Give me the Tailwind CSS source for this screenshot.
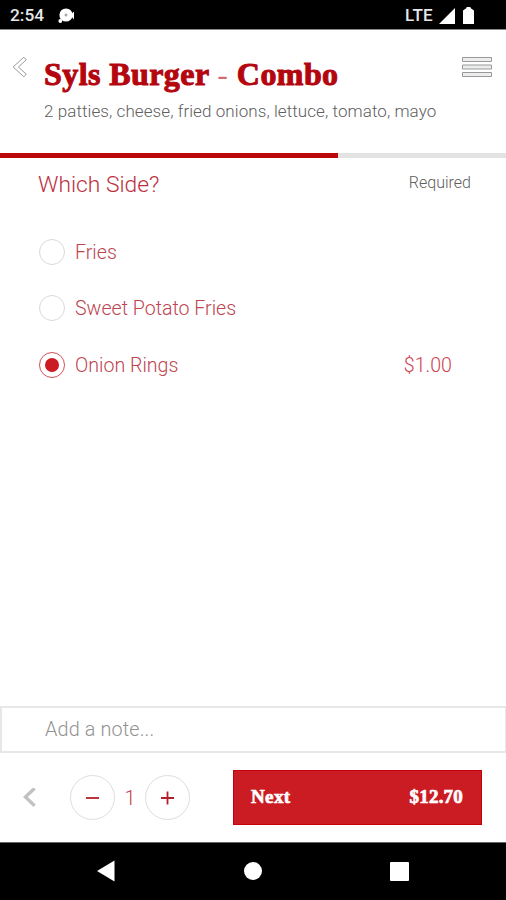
<!DOCTYPE html>
<html lang="en">

<head>
    <meta charset="UTF-8">
    <meta name="viewport" content="width=device-width, initial-scale=1.0">
    <title>Syls Burger - Combo</title>
    <script src="https://cdn.jsdelivr.net/npm/@tailwindcss/browser@4"></script>
</head>

<body>
    <div class="w-[506px] h-[900px] flex flex-col overflow-hidden bg-white font-['Roboto',sans-serif] font-light whitespace-nowrap">
        <!-- status bar -->
        <div class="h-[30px] shrink-0 bg-black border-b border-[#8a8a8a] flex items-center justify-between pl-[10px] pr-[32px] pt-[2px] text-white">
            <div class="flex items-center gap-[13px]">
                <span class="w-[35px] text-[17.3px] font-medium text-[#e8e8e8]">2:54</span>
                <svg class="w-[17px] h-[16px]" viewBox="0 0 17 16" fill="#fff">
                    <circle cx="8" cy="7" r="6.6" />
                    <circle cx="2.3" cy="13" r="1.9" />
                    <path d="M12 7l4-3.5v8z" />
                    <circle cx="8" cy="7" r="1.5" fill="#aaa" />
                </svg>
            </div>
            <div class="flex items-center">
                <span class="w-[34px] text-[17px] font-medium tracking-[0.3px] text-[#e8e8e8]">LTE</span>
                <svg class="w-[16px] h-[16px]" viewBox="0 0 16 16" fill="#fff">
                    <path d="M16 0v16H0z" />
                </svg>
                <svg class="w-[11px] h-[17px] ml-[8px]" viewBox="0 0 11 17" fill="#fff">
                    <path d="M3.5 0h4v1L11 3.5V17H0V3.5L3.5 1z" />
                </svg>
            </div>
        </div>

        <!-- header -->
        <div class="h-[123px] shrink-0 flex items-start pl-[12px] pr-[14px]">
            <svg class="w-[16px] h-[22px] mt-[26px]" viewBox="0 0 16 22" fill="none" stroke="#999" stroke-width="1">
                <path d="M11.8 1.2L1.2 11l10.6 9.8 2.4-2.6L6.4 11l7.8-7.2z" />
            </svg>
            <div class="ml-[16px] flex-1 pt-[24px]">
                <h1 class="h-[40px] leading-[40px] text-[32px] tracking-[0.42px] font-bold font-['Liberation_Serif',serif] text-[#b3060f] [-webkit-text-stroke:1px_#b3060f]">Syls Burger <span class="font-normal text-[#b3060f]/60 [-webkit-text-stroke:0px]">-</span> Combo</h1>
                <p class="mt-[5px] text-[17px] tracking-[0.08px] leading-[24px] text-[#606060]">2 patties, cheese, fried onions, lettuce, tomato, mayo</p>
            </div>
            <svg class="w-[30px] h-[22px] mt-[26px]" viewBox="0 0 30 22" fill="#eceeee" stroke="#999" stroke-width="1">
                <path d="M.5 1.5h29v4H.5zM.5 9h29v4H.5zM.5 16.5h29v4H.5z" />
            </svg>
        </div>
        <div class="h-[5px] shrink-0 bg-[#e3e3e3]">
            <div class="w-[338px] h-[5px] bg-[#bc0808]"></div>
        </div>

        <!-- options -->
        <div class="h-[548px] shrink-0 pl-[38px]">
            <div class="h-[65px] flex justify-between pr-[35px]">
                <h2 class="pt-[12px] text-[22.8px] leading-[30px] text-[#bb3040]">Which Side?</h2>
                <span class="pt-[14px] text-[16px] leading-[22px] text-[#606060]">Required</span>
            </div>
            <label class="h-[57px] flex items-center gap-[10px] pl-[1px]">
                <span class="size-[26px] rounded-full border border-[#d8d8d8]"></span>
                <span class="pt-[2px] text-[19.6px] text-[#bd4450]">Fries</span>
            </label>
            <label class="h-[56px] flex items-center gap-[10px] pl-[1px]">
                <span class="size-[26px] rounded-full border border-[#d8d8d8]"></span>
                <span class="pt-[2px] text-[19.6px] text-[#bd4450]">Sweet Potato Fries</span>
            </label>
            <label class="h-[57px] flex items-center gap-[10px] pl-[1px] pr-[54px]">
                <span class="size-[26px] rounded-full border border-[#d4505a] flex items-center justify-center">
                    <span class="size-[14px] rounded-full bg-[#cb1c24]"></span>
                </span>
                <span class="flex-1 pt-[2px] text-[19.6px] text-[#bd4450]">Onion Rings</span>
                <span class="pt-[2px] text-[19.6px] text-[#cc4450]">$1.00</span>
            </label>
        </div>

        <!-- note -->
        <div class="h-[47px] shrink-0 border-2 border-r border-[#e6e8e8] pl-[43px] leading-[43px] text-[19.8px] tracking-[0.15px] text-[#929292]">Add a note...</div>

        <!-- bottom actions -->
        <div class="h-[89px] shrink-0 flex items-center pl-[23px] pr-[24px]">
            <svg class="w-[13px] h-[20px]" viewBox="0 0 13 20" fill="none" stroke="#c2c2c2" stroke-width="3.4">
                <path d="M11.6 .2L2.4 9l9.2 8.8" />
            </svg>
            <button class="ml-[34px] size-[45px] rounded-full border border-[#dedede] flex items-center justify-center">
                <svg class="w-[14px] h-[14px]" viewBox="0 0 14 14" stroke="#b3202c" stroke-width="1.8">
                    <path d="M0 7h13" />
                </svg>
            </button>
            <span class="w-[30px] text-center text-[20px] text-[#bd4450]">1</span>
            <button class="size-[45px] rounded-full border border-[#dedede] flex items-center justify-center">
                <svg class="w-[14px] h-[14px]" viewBox="0 0 14 14" stroke="#b3202c" stroke-width="1.8">
                    <path d="M0 7h13M6.5 .5v13" />
                </svg>
            </button>
            <button class="ml-auto w-[249px] h-[55px] bg-[#cb1c24] border border-[#c3000b] flex items-center justify-between pl-[17px] pr-[18px] text-white text-[19px] font-bold font-['Liberation_Serif',serif] [-webkit-text-stroke:0.7px_#fff]">
                <span class="tracking-[0.4px]">Next</span>
                <span class="tracking-[0.2px]">$12.70</span>
            </button>
        </div>

        <!-- navigation bar -->
        <div class="h-[58px] shrink-0 bg-black border-t border-[#666] flex items-center pl-[96px] pb-[1px]">
            <svg class="w-[19px] h-[22px]" viewBox="0 0 19 22" fill="#fff">
                <path d="M18.5 .5v21L1 11z" />
            </svg>
            <div class="ml-[129px] size-[18px] rounded-full bg-white"></div>
            <div class="ml-[128px] size-[19px] rounded-[1px] bg-white"></div>
        </div>
    </div>
</body>

</html>
